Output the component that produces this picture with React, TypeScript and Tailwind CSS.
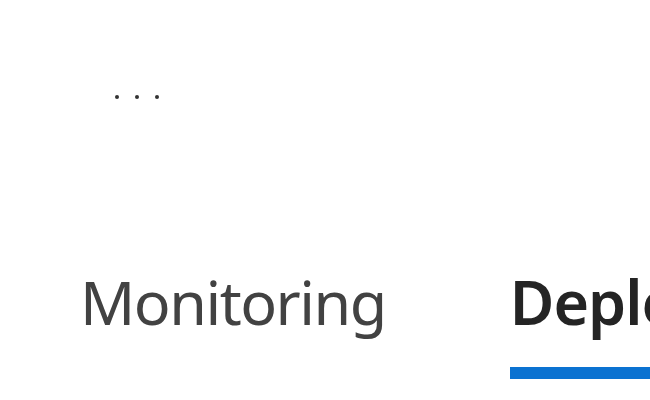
export default function App() {
  return (
    <div className="w-[650px] h-[400px] bg-white overflow-hidden" style={{ fontFamily: '"Noto Sans", "Open Sans", sans-serif' }}>
      <div className="flex gap-[16px] pl-[115px] pt-[95px]">
        <span className="w-[4px] h-[4px] bg-[#333] rounded-full" />
        <span className="w-[4px] h-[4px] bg-[#333] rounded-full" />
        <span className="w-[4px] h-[4px] bg-[#333] rounded-full" />
      </div>
      <div className="flex pl-[80px] pt-[172px] gap-[124px] whitespace-nowrap">
        <div className="flex flex-col">
          <span className="text-[61px] leading-[61px] tracking-[-1.5px] text-[#424242]">Monitoring</span>
        </div>
        <div className="flex flex-col">
          <span className="text-[61px] leading-[61px] tracking-[-1px] font-semibold text-[#242424]">Deployment</span>
          <span className="h-[12px] bg-[#0b72d1] mt-[35px]" />
        </div>
      </div>
    </div>
  );
}
